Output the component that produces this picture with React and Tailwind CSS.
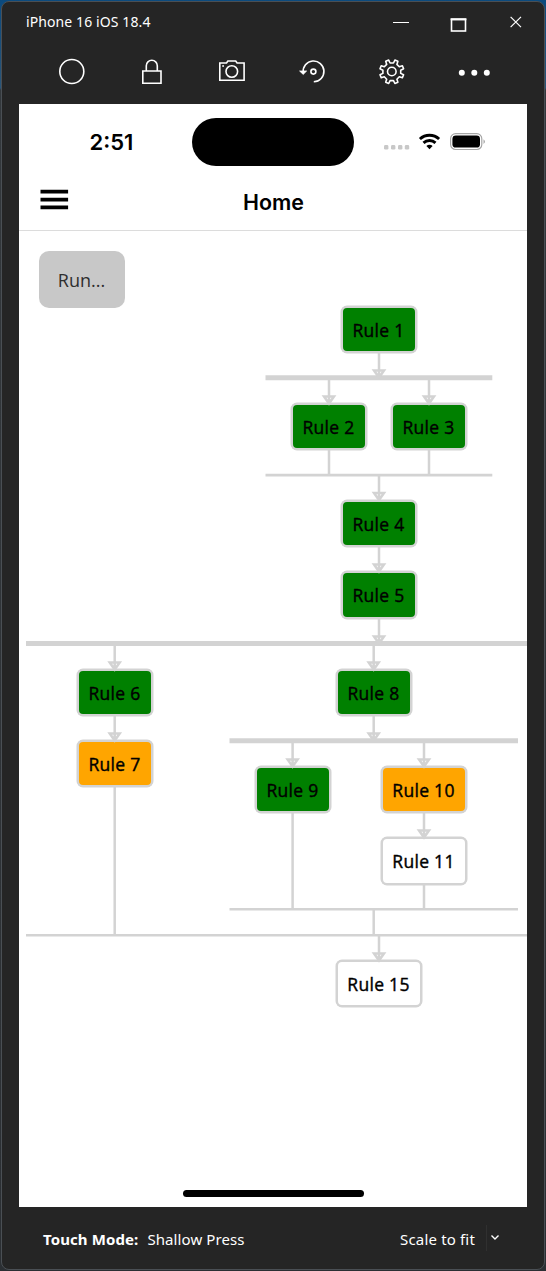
import React from "react";

const nodes = [
  { label: "Rule 1", place: "left-[322px] top-[75px] w-[76px] h-[47px]", fill: "bg-[#008000]" },
  { label: "Rule 2", place: "left-[272px] top-[172px] w-[76px] h-[47px]", fill: "bg-[#008000]" },
  { label: "Rule 3", place: "left-[372px] top-[172px] w-[76px] h-[47px]", fill: "bg-[#008000]" },
  { label: "Rule 4", place: "left-[322px] top-[269px] w-[76px] h-[47px]", fill: "bg-[#008000]" },
  { label: "Rule 5", place: "left-[322px] top-[340px] w-[76px] h-[48px]", fill: "bg-[#008000]" },
  { label: "Rule 6", place: "left-[58px] top-[438px] w-[76px] h-[47px]", fill: "bg-[#008000]" },
  { label: "Rule 7", place: "left-[58px] top-[509px] w-[76px] h-[47px]", fill: "bg-[#ffa500]" },
  { label: "Rule 8", place: "left-[317px] top-[438px] w-[76px] h-[47px]", fill: "bg-[#008000]" },
  { label: "Rule 9", place: "left-[236px] top-[535px] w-[76px] h-[47px]", fill: "bg-[#008000]" },
  { label: "Rule 10", place: "left-[362px] top-[535px] w-[86px] h-[47px]", fill: "bg-[#ffa500]" },
  { label: "Rule 11", place: "left-[362px] top-[606px] w-[86px] h-[48px]", fill: "bg-white" },
  { label: "Rule 15", place: "left-[317px] top-[729px] w-[86px] h-[47px]", fill: "bg-white" },
];

/* [x, y1, y2] : connectors that end in an arrow head at y2 */
const arrows = [
  [360, 122, 147],
  [310, 148, 173],
  [410, 148, 173],
  [360, 245, 269.5],
  [360, 316, 341],
  [360, 388, 413],
  [95.7, 414, 439],
  [95.7, 485, 510],
  [354.7, 414, 439],
  [354.7, 485, 510],
  [273.6, 511, 536],
  [405, 511, 536],
  [405, 582, 607],
  [360, 705, 730],
];

/* [x, y1, y2] : plain vertical connectors */
const stems = [
  [310, 219, 244],
  [410, 219, 244],
  [95.7, 556, 704],
  [273.6, 582, 678],
  [405, 654, 678],
  [354.7, 678, 704],
];

/* [x1, x2, y, thickness] */
const bars = [
  [246.5, 473.3, 146.7, 5],
  [246.5, 473.3, 244.1, 2.6],
  [7, 508, 412.6, 5],
  [210.5, 499, 509.7, 5],
  [210.5, 499, 678.3, 2.6],
  [7, 508, 704.3, 2.6],
];

function FlowChart() {
  return (
    <>
      {nodes.map((n) => (
        <div
          key={n.label}
          className={`absolute flex items-center justify-center rounded-[6px] border-[2px] border-[#d3d3d3] pr-[1px] pt-[2px] shadow-[0_0_0_0.5px_#d3d3d3] font-['Open_Sans',sans-serif] text-[17.5px] leading-none font-medium tracking-[0.3px] text-black [-webkit-text-stroke:0.4px_black] whitespace-nowrap ${n.place} ${n.fill}`}
        >
          {n.label}
        </div>
      ))}
      <svg className="absolute inset-0" width="508" height="976" viewBox="0 0 508 976" fill="none" stroke="#d3d3d3">
        {bars.map(([x1, x2, y, t]) => (
          <path key={`${x1}-${y}`} d={`M${x1} ${y}H${x2}`} strokeWidth={t} />
        ))}
        {stems.map(([x, a, b]) => (
          <path key={`${x}-${a}`} d={`M${x} ${a}V${b}`} strokeWidth="2.5" />
        ))}
        {arrows.map(([x, a, b]) => (
          <path key={`${x}-${a}`} d={`M${x} ${a}V${b}M${x - 5} ${b - 7.6}H${x + 5}L${x} ${b - 0.5}Z`} strokeWidth="2.5" />
        ))}
      </svg>
    </>
  );
}

function TitleBar() {
  return (
    <div className="flex h-[44px] items-start justify-between pl-[24px] pr-[21px]">
      <span className="pt-[10px] text-[14px] leading-[20px] tracking-[0.1px]">iPhone 16 iOS 18.4</span>
      <svg width="132" height="40" viewBox="391 2 132 40" fill="none" stroke="#fff">
        <path d="M393 22.5h16" />
        <rect x="451.5" y="19.5" width="14" height="11.5" strokeWidth="1.6" />
        <path d="M450.6 19.2h15.8" strokeWidth="2" />
        <path d="M510.6 16.8l10.4 10.4M521 16.8l-10.4 10.4" strokeWidth="1.2" />
      </svg>
    </div>
  );
}

function Toolbar() {
  return (
    <div className="flex h-[58px] pl-[54px]">
      <svg width="440" height="50" viewBox="56 46 440 50" fill="none" stroke="#fff" strokeWidth="1.6">
        <circle cx="71.8" cy="71.5" r="12" />
        <path d="M142.8 71h18.2v12.2h-18.2zM146.3 71v-5.3a5.5 5.5 0 0 1 11 0V71" />
        <path d="M219.8 63h6.7l1.4-2h7.8l1.4 2h7v17.2h-24.3z" />
        <circle cx="231.8" cy="71.5" r="5.8" />
        <path d="M222.2 66h1.8" />
        <path d="M303.2 72.6a10.4 10.4 0 1 1 10.6 9.2" />
        <path d="M299.6 71l3.6 3.4 3.4-3.4z" fill="#fff" strokeWidth="0.8" />
        <circle cx="313.4" cy="71.6" r="2.5" />
        <circle cx="391.8" cy="71.5" r="4.3" />
        <path
          strokeLinejoin="round"
          d="M388.7 60.1l1.4 2.9h3.4l1.4-2.9 3 1.2-1 3.1 2.4 2.4 3.1-1 1.2 3-2.9 1.4v3.2l2.9 1.4-1.2 3-3.1-1-2.4 2.4 1 3.1-3 1.2-1.4-2.9h-3.4l-1.4 2.9-3-1.2 1-3.1-2.4-2.4-3.1 1-1.2-3 2.9-1.4v-3.2l-2.9-1.4 1.2-3 3.1 1 2.4-2.4-1-3.1z"
        />
        <g fill="#fff" stroke="none">
          <circle cx="461.8" cy="72.7" r="3" />
          <circle cx="474.3" cy="72.7" r="3" />
          <circle cx="486.8" cy="72.7" r="3" />
        </g>
      </svg>
    </div>
  );
}

function StatusBar() {
  return (
    <div className="relative flex h-[72px] font-[Inter,sans-serif]">
      <span className="w-[173px] pl-[70.5px] pt-[25px] text-[22px] leading-[27px] font-semibold">2:51</span>
      <div className="mt-[14px] h-[48px] w-[162px] rounded-full bg-black" />
      <svg className="ml-[29px] mt-[24px]" width="104" height="28" viewBox="383 128 104 28">
        <g fill="#c8c8c8">
          <rect x="384" y="145" width="4.4" height="4.6" rx="1.4" />
          <rect x="391" y="145" width="4.4" height="4.6" rx="1.4" />
          <rect x="398" y="145" width="4.4" height="4.6" rx="1.4" />
          <rect x="404.8" y="145" width="4.4" height="4.6" rx="1.4" />
        </g>
        <g fill="none" stroke="#000" strokeWidth="2.9">
          <path d="M419.9 139a14 14 0 0 1 19.2 0" />
          <path d="M423.5 142.9a8.9 8.9 0 0 1 12 0" />
        </g>
        <path d="M429.5 149.2l-3.1-3.1a4.4 4.4 0 0 1 6.2 0z" />
        <rect x="450.6" y="133.7" width="31.2" height="15.8" rx="5" fill="none" stroke="#a6a6a6" strokeWidth="1.2" />
        <rect x="452.4" y="135.6" width="27.6" height="12" rx="3.4" />
        <path d="M483.5 139.2q3 2.4 0 4.8z" fill="#a6a6a6" />
      </svg>
    </div>
  );
}

function NavBar() {
  return (
    <div className="grid h-[55px] grid-cols-[1fr_auto_1fr] border-b border-[#dcdcdc]">
      <svg className="ml-[21px] mt-[13px]" width="29" height="22" viewBox="0 0 29 22">
        <path d="M0.5 2.6h27.6M0.5 10.6h27.6M0.5 18.4h27.6" stroke="#000" strokeWidth="3.8" />
      </svg>
      <h1 className="pl-[1px] pt-[12px] font-[Inter,sans-serif] text-[21.4px] leading-[28px] font-semibold">Home</h1>
    </div>
  );
}

export default function App() {
  return (
    <div className="h-[1271px] w-[546px] overflow-hidden bg-[linear-gradient(#0b4a7e_0,#2a5578_88px,#33383c_90px,#2b2f33_100%)] pl-px pr-px pt-px font-['Noto_Sans',sans-serif]">
      <div className="flex h-[1269px] w-[544px] flex-col rounded-[8px] border border-[#4a4f54] bg-[#252525] text-white">
        <TitleBar />
        <Toolbar />
        <main className="ml-[17px] flex h-[1103px] w-[508px] flex-col bg-white text-black">
          <StatusBar />
          <NavBar />
          <div className="relative flex flex-1 flex-col items-start justify-between">
            <FlowChart />
            <button className="ml-[20px] mt-[20px] h-[57px] w-[86px] rounded-[10px] bg-[#c8c8c8] pr-[1px] pt-[1px] font-['Open_Sans',sans-serif] text-[18px] text-[#2e2e2e]">
              Run...
            </button>
            <div className="mb-[10px] h-[7px] w-[181px] self-center rounded-full bg-black" />
          </div>
        </main>
        <footer className="flex h-[62px] items-center pl-[41px] pr-[44px] pt-[2px] text-[15px] leading-[20px]">
          <b className="font-bold tracking-[0.1px]">Touch Mode:</b>
          <span className="ml-[9px] tracking-[0.1px]">Shallow Press</span>
          <span className="ml-auto tracking-[0.17px]">Scale to fit</span>
          <i className="mb-[2px] ml-[11px] h-[26px] w-px bg-[#303030]" />
          <svg className="mb-[2px] ml-[3px]" width="10" height="10" viewBox="0 0 10 10" fill="none" stroke="#fff" strokeWidth="1.4">
            <path d="M1.5 2.5L5 6l3.5-3.5" />
          </svg>
        </footer>
      </div>
    </div>
  );
}
